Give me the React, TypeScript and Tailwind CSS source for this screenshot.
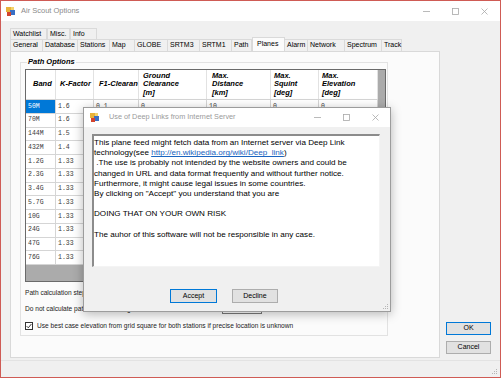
import React from "react";

const topTabs = [
  { label: "Watchlist", w: "w-[37px]" },
  { label: "Misc.", w: "w-[23px]" },
  { label: "Info", w: "w-[27px]" },
];

const bottomTabs = [
  { label: "General", w: "w-[33px]" },
  { label: "Database", w: "w-[35px]" },
  { label: "Stations", w: "w-[32px]" },
  { label: "Map", w: "w-[25px]" },
  { label: "GLOBE", w: "w-[33px]" },
  { label: "SRTM3", w: "w-[32px]" },
  { label: "SRTM1", w: "w-[32px]" },
  { label: "Path", w: "w-[20px]" },
  { label: "Planes", w: "w-[33px]", active: true },
  { label: "Alarm", w: "w-[23px]" },
  { label: "Network", w: "w-[37px]" },
  { label: "Spectrum", w: "w-[37px]" },
  { label: "Track", w: "w-[20px]" },
];

const columns = [
  { lines: ["Band"], w: "w-[30px]", pad: "pl-[7px]" },
  { lines: ["K-Factor"], w: "w-[38px]", pad: "pl-[4px]" },
  { lines: ["F1-Clearan"], w: "w-[45px]", pad: "pl-[5px]" },
  { lines: ["Ground", "Clearance", "[m]"], w: "w-[68px]", pad: "pl-[4px]" },
  { lines: ["Max.", "Distance", "[km]"], w: "w-[64px]", pad: "pl-[5px]" },
  { lines: ["Max.", "Squint", "[deg]"], w: "w-[48px]", pad: "pl-[3px]" },
  { lines: ["Max.", "Elevation", "[deg]"], w: "w-[59px]", pad: "pl-[3px]" },
];

const bands = ["50M", "70M", "144M", "432M", "1.2G", "2.3G", "3.4G", "5.7G", "10G", "24G", "47G", "76G"];
const kFactors = ["1.6", "1.6", "1.5", "1.4", "1.33", "1.33", "1.33", "1.33", "1.33", "1.33", "1.33", "1.33"];

function AppIcon() {
  return (
    <svg width="9" height="9" viewBox="0 0 9 9">
      <rect x="0" y="0" width="5" height="5" fill="#e8b23a" />
      <rect x="4" y="3" width="5" height="5" fill="#3a6fc4" />
      <rect x="1" y="5" width="4" height="4" fill="#d2442f" />
      <rect x="5" y="0" width="3" height="3" fill="#f3d36b" />
    </svg>
  );
}

function WindowControls() {
  return (
    <div className="flex items-center gap-[22px] text-[#a8a8a8]">
      <svg width="7" height="7" viewBox="0 0 7 7">
        <line x1="0" y1="3.5" x2="7" y2="3.5" stroke="currentColor" strokeWidth="0.8" />
      </svg>
      <svg width="7" height="7" viewBox="0 0 7 7">
        <rect x="0.5" y="0.5" width="6" height="6" fill="none" stroke="currentColor" strokeWidth="0.8" />
      </svg>
      <svg width="7" height="7" viewBox="0 0 7 7">
        <path d="M0.5 0.5 L6.5 6.5 M6.5 0.5 L0.5 6.5" stroke="currentColor" strokeWidth="0.8" />
      </svg>
    </div>
  );
}

function Grip() {
  return (
    <svg width="6" height="6" viewBox="0 0 6 6">
      <rect x="4" y="0" width="1" height="1" fill="#b5b5b5" />
      <rect x="2" y="2" width="1" height="1" fill="#b5b5b5" />
      <rect x="4" y="2" width="1" height="1" fill="#b5b5b5" />
      <rect x="0" y="4" width="1" height="1" fill="#b5b5b5" />
      <rect x="2" y="4" width="1" height="1" fill="#b5b5b5" />
      <rect x="4" y="4" width="1" height="1" fill="#b5b5b5" />
    </svg>
  );
}

function PlanesGrid() {
  return (
    <div className="w-[361px] h-[213px] border border-[#6a6a6a] bg-[#ababab] overflow-hidden">
      <div className="w-[352px] bg-white">
        <div className="flex h-[30px] border-b border-[#d5d5d5]">
          {columns.map((c) => (
            <div
              key={c.lines.join()}
              className={`${c.w} ${c.pad} shrink-0 border-r border-[#e2e2e2] flex flex-col justify-center font-bold italic text-[7.5px] leading-[8.5px] text-black overflow-hidden whitespace-nowrap`}
            >
              {c.lines.map((l) => (
                <span key={l}>{l}</span>
              ))}
            </div>
          ))}
        </div>
        {bands.map((b, i) => (
          <div key={b} className="flex h-[13.75px] border-b border-[#d5d5d5] font-['Liberation_Mono',monospace] text-[6.5px] text-[#3a3a3a]">
            <div className={`w-[30px] shrink-0 border-r border-[#d5d5d5] pl-[2px] flex items-center ${i === 0 ? "bg-[#0078d7] text-white" : ""}`}>{b}</div>
            <div className="w-[38px] shrink-0 border-r border-[#d5d5d5] pl-[2px] flex items-center">{kFactors[i]}</div>
            <div className="w-[45px] shrink-0 border-r border-[#d5d5d5] pl-[2px] flex items-center">{i === 0 ? "0.1" : ""}</div>
            <div className="w-[68px] shrink-0 border-r border-[#d5d5d5] pl-[2px] flex items-center">{i === 0 ? "0" : ""}</div>
            <div className="w-[64px] shrink-0 border-r border-[#d5d5d5] pl-[2px] flex items-center">{i === 0 ? "10" : ""}</div>
            <div className="w-[48px] shrink-0 border-r border-[#d5d5d5] pl-[2px] flex items-center">{i === 0 ? "0" : ""}</div>
            <div className="w-[59px] shrink-0 border-r border-[#d5d5d5] pl-[2px] flex items-center">{i === 0 ? "0" : ""}</div>
          </div>
        ))}
      </div>
    </div>
  );
}

function DeepLinkDialog() {
  return (
    <div className="absolute left-[82px] top-[106px] w-[308px] h-[205px] border border-[#9c9c9c] bg-[#f0f0f0] shadow-[0_2px_10px_rgba(0,0,0,0.28)] flex flex-col">
      <div className="h-[19px] shrink-0 bg-white flex items-center pl-[6px] pr-[11px]">
        <AppIcon />
        <span className="ml-[10px] text-[7.3px] text-[#9a9a9a]">Use of Deep Links from Internet Server</span>
        <div className="ml-auto">
          <WindowControls />
        </div>
      </div>
      <div className="flex-1 flex flex-col pl-[8px] pt-[7px]">
        <div className="w-[288px] h-[133px] bg-white border-t-2 border-l-2 border-t-[#8c8c8c] border-l-[#8c8c8c] border-r border-b border-r-[#f4f4f4] border-b-[#f4f4f4] pt-[2px] text-[8.1px] leading-[10.2px] text-black whitespace-pre">
          <div>This plane feed might fetch data from an Internet server via Deep Link</div>
          <div>
            technology(see <span className="text-[#1a64c0] underline">http://en.wikipedia.org/wiki/Deep_link</span>)
          </div>
          <div> .The use is probably not intended by the website owners and could be</div>
          <div>changed in URL and data format frequently and without further notice.</div>
          <div>Furthermore, it might cause legal issues in some countries.</div>
          <div>By clicking on "Accept" you understand that you are</div>
          <div> </div>
          <div>DOING THAT ON YOUR OWN RISK</div>
          <div> </div>
          <div>The auhor of this software will not be responsible in any case.</div>
        </div>
        <div className="flex gap-[15px] mt-[22px] ml-[78px] text-[7px] text-black">
          <div className="w-[47px] h-[14px] bg-[#e1e1e1] border border-[#0078d7] flex items-center justify-center">Accept</div>
          <div className="w-[46px] h-[14px] bg-[#e1e1e1] border border-[#adadad] flex items-center justify-center">Decline</div>
        </div>
        <div className="mt-auto self-end pr-[1px] pb-[1px]">
          <Grip />
        </div>
      </div>
    </div>
  );
}

export default function App() {
  return (
    <div className="relative w-[501px] h-[378px] bg-[#f0f0f0] border border-[#cf5b55] overflow-hidden font-['Liberation_Sans',Arial,sans-serif] text-black flex flex-col">
      <div className="h-[20px] shrink-0 bg-white flex items-center pl-[5px] pr-[12px]">
        <AppIcon />
        <span className="ml-[6px] text-[7.5px] text-[#8a8a8a]">Air Scout Options</span>
        <div className="ml-auto">
          <WindowControls />
        </div>
      </div>

      <div className="flex-1 flex pl-[9px]">
        <div className="w-[430px] pt-[7px] flex flex-col">
          <div className="flex h-[11px] text-[7px]">
            {topTabs.map((t) => (
              <div key={t.label} className={`${t.w} border-t border-r border-l border-[#dadada] first:border-l pl-[2px] flex items-center`}>
                {t.label}
              </div>
            ))}
          </div>
          <div className="flex h-[12px] text-[7px] relative z-10">
            {bottomTabs.map((t) =>
              t.active ? (
                <div key={t.label} className={`${t.w} h-[14px] -mt-[2px] bg-[#fbfbfb] border-t border-l border-r border-[#d9d9d9] pl-[4px] flex items-center`}>
                  {t.label}
                </div>
              ) : (
                <div key={t.label} className={`${t.w} border-t border-r border-[#dadada] first:border-l pl-[2px] flex items-center`}>
                  {t.label}
                </div>
              )
            )}
          </div>
          <div className="h-[307px] bg-[#fbfbfb] border border-[#d9d9d9] pl-[9px] pt-[10px]">
            <div className="relative w-[368px] h-[274px] border border-[#e2e2e2] pl-[4px] pt-[6px]">
              <span className="absolute left-[6px] -top-[5px] px-[1px] bg-[#fbfbfb] font-bold italic text-[7.5px] leading-[8px]">Path Options</span>
              <PlanesGrid />
              <div className="mt-[7px] text-[6.6px] leading-[8px] text-[#222]">Path calculation stepwidth [m]</div>
              <div className="mt-[7px] flex items-center text-[6.6px] leading-[8px] text-[#222]">
                <span>Do not calculate path if distance is greater than</span>
                <div className="ml-[60px] w-[40px] h-[10px] bg-white border border-[#7a7a7a]" />
              </div>
              <div className="mt-[8px] flex items-center gap-[4px] text-[6.6px] leading-[8px] text-[#222]">
                <div className="w-[8px] h-[8px] bg-white border border-[#333] flex items-center justify-center">
                  <svg width="6" height="6" viewBox="0 0 6 6">
                    <path d="M0.6 3.1 L2.3 4.8 L5.4 1" fill="none" stroke="#222" strokeWidth="0.9" />
                  </svg>
                </div>
                <span>Use best case elevation from grid square for both stations if precise location is unknown</span>
              </div>
            </div>
          </div>
        </div>

        <div className="flex-1 flex flex-col justify-end items-start pl-[6px] pb-[6px] gap-[6px] text-[7px]">
          <div className="w-[45px] h-[13px] bg-[#e1e1e1] border border-[#0078d7] flex items-center justify-center">OK</div>
          <div className="w-[45px] h-[13px] bg-[#e1e1e1] border border-[#adadad] flex items-center justify-center">Cancel</div>
        </div>
      </div>

      <div className="h-[17px] shrink-0 border-t border-[#e3e3e3] flex items-end justify-end pr-[2px] pb-[2px]">
        <Grip />
      </div>

      <DeepLinkDialog />
    </div>
  );
}
